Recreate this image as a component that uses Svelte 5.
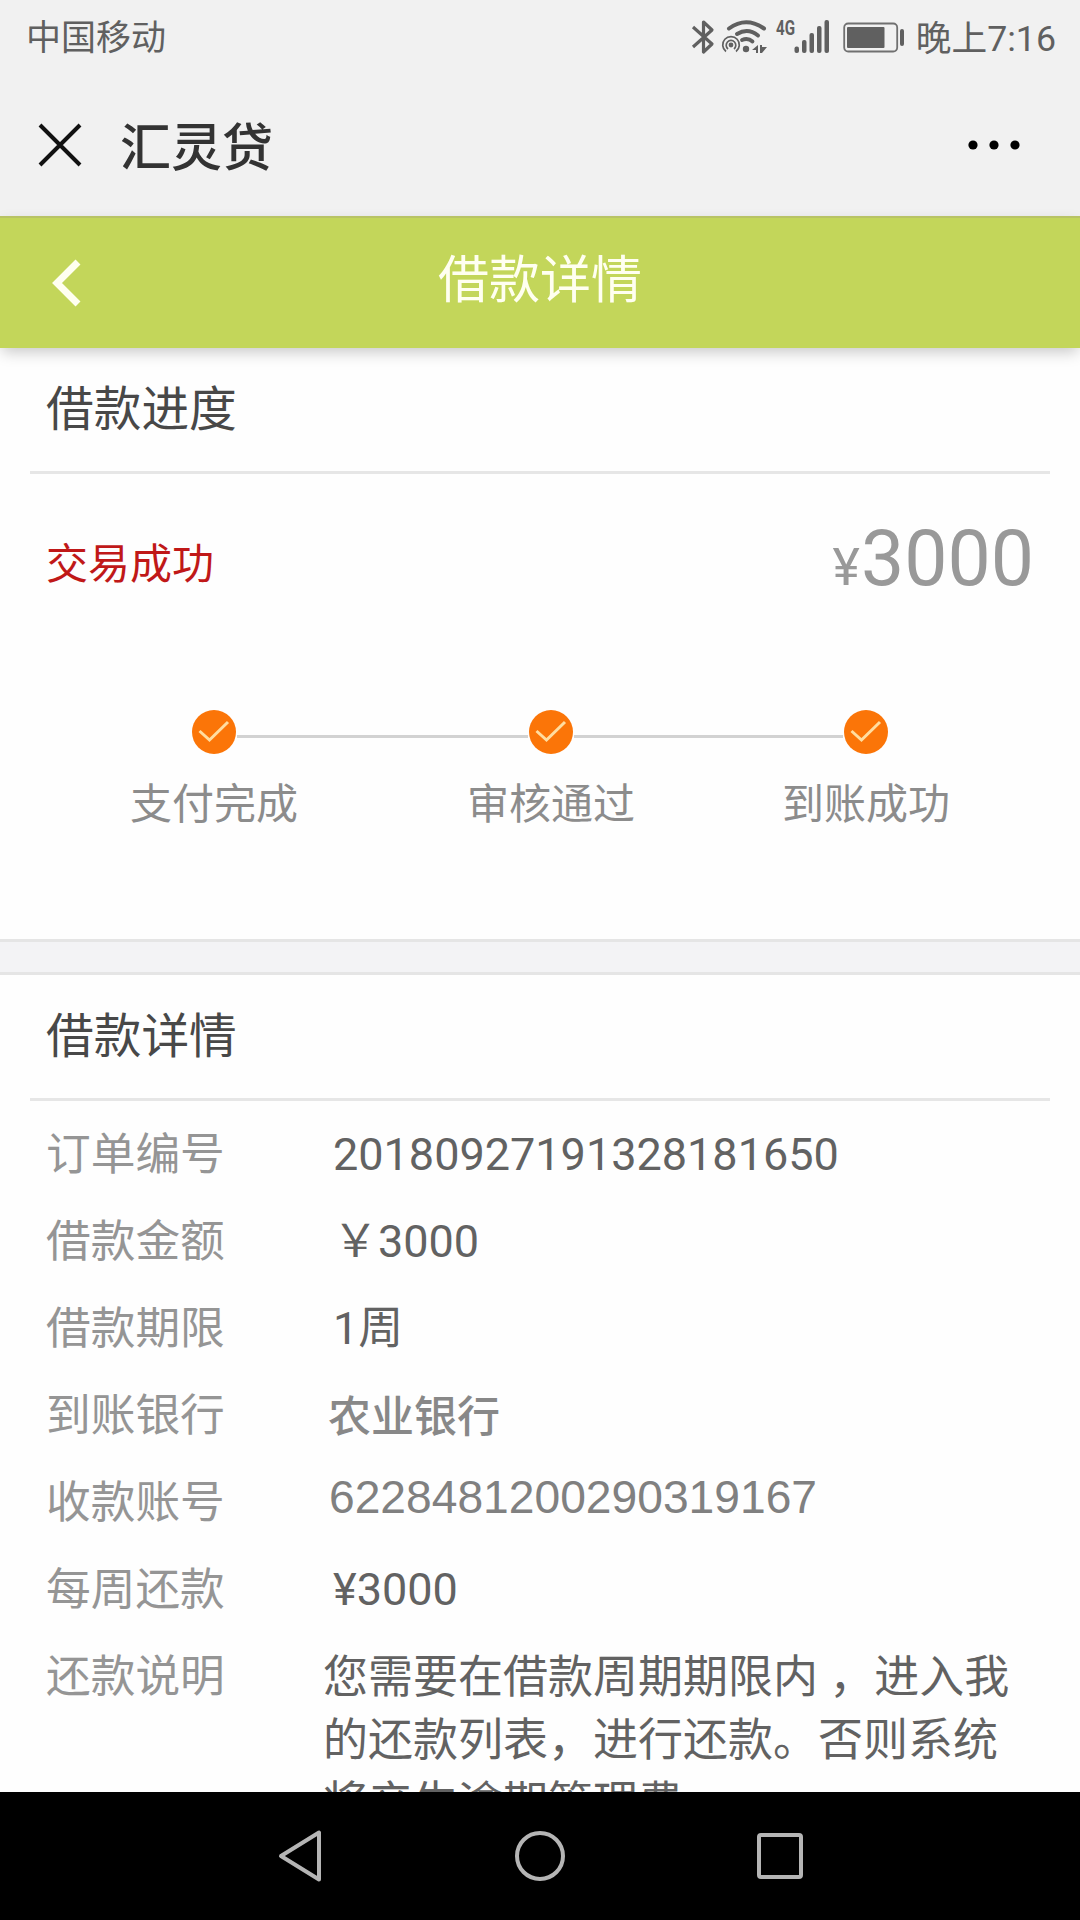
<script>
  const steps = ["支付完成", "审核通过", "到账成功"];

  const details = [
    { label: "订单编号", value: "20180927191328181650" },
    { label: "借款金额", value: "￥3000" },
    { label: "借款期限", value: "1周" },
    { label: "到账银行", value: "农业银行", kind: "bank" },
    { label: "收款账号", value: "6228481200290319167", kind: "account" },
    { label: "每周还款", value: "¥3000" },
    {
      label: "还款说明",
      value: "您需要在借款周期期限内 ，进入我的还款列表，进行还款。否则系统将产生逾期管理费。",
      kind: "note",
    },
  ];
</script>

<style>
  :global(body) {
    margin: 0;
  }

  .screen {
    display: flex;
    flex-direction: column;
    width: 1080px;
    height: 1920px;
    overflow: hidden;
    background: #fefefe;
    font-family: Roboto, "Noto Sans CJK SC", sans-serif;
  }

  svg {
    display: block;
    flex: none;
  }

  /* Status bar */
  .status {
    display: flex;
    flex: none;
    align-items: center;
    justify-content: space-between;
    box-sizing: border-box;
    height: 74px;
    padding: 0 24px 0 26px;
    background: #f1f1f1;
    color: #606060;
    font-size: 35px;
    line-height: 74px;
  }

  .status > span {
    padding-top: 4px;
  }

  .indicators {
    display: flex;
    align-items: center;
    gap: 11px;
  }

  .clock {
    padding-top: 3px;
    font-size: 35.7px;
  }

  /* Webview title */
  .titlebar {
    display: flex;
    flex: none;
    align-items: center;
    box-sizing: border-box;
    height: 142px;
    padding: 0 59px 0 38px;
    background: #f1f1f1;
    color: #333;
  }

  .titlebar h1 {
    flex: 1;
    margin: 0 0 0 38px;
    padding-top: 7px;
    font-size: 51px;
    font-weight: 500;
    line-height: 135px;
  }

  /* Page header */
  .header {
    display: grid;
    flex: none;
    grid-template-columns: 120px 1fr 120px;
    align-items: center;
    box-sizing: border-box;
    height: 132px;
    border-top: 2px solid #b8c365;
    background: #c3d65a;
    box-shadow: 0 6px 14px -2px rgba(0, 0, 0, 0.22);
    color: #fffff0;
  }

  .header svg {
    margin: 0 0 2px 50px;
  }

  .header h2 {
    margin: 0;
    padding-bottom: 6px;
    font-size: 51px;
    font-weight: 400;
    line-height: 126px;
    text-align: center;
  }

  .content {
    flex: 1;
    min-height: 0;
    overflow: hidden;
  }

  .section-title {
    margin: 0 30px;
    border-bottom: 3px solid #e6e6e6;
    padding-left: 16px;
    height: 123px;
    color: #484848;
    font-size: 47.7px;
    font-weight: 400;
    line-height: 124px;
  }

  /* Progress */
  .progress {
    height: 591px;
  }

  .summary {
    display: flex;
    justify-content: space-between;
    height: 170px;
    padding: 0 46px;
  }

  .result {
    color: #c01818;
    font-size: 42px;
    line-height: 181px;
  }

  .amount {
    color: #999;
    font-size: 77px;
    line-height: 170px;
  }

  .amount small {
    margin-right: 1px;
    font-size: 52px;
  }

  .steps {
    display: flex;
    align-items: flex-start;
    padding: 65px 130px 0;
  }

  .step {
    display: flex;
    flex-direction: column;
    align-items: center;
    width: 168px;
    color: #8c8c8c;
    font-size: 42px;
    line-height: 60px;
  }

  .step svg {
    margin-bottom: 20px;
  }

  .line {
    flex: 291 0 0;
    height: 3px;
    margin: 26px -61px 0;
    background: #d2d2d2;
  }

  .line:nth-child(4) {
    flex-grow: 269;
  }

  .divider {
    box-sizing: border-box;
    height: 36px;
    border: solid #e5e5e5;
    border-width: 3px 0;
    background: #f3f3f5;
  }

  /* Details */
  .details {
    margin: 0;
    padding: 11px 46px 0;
    font-size: 45px;
  }

  .row {
    display: flex;
    height: 87px;
    line-height: 87px;
  }

  dt {
    flex: none;
    width: 287px;
    color: #959595;
    font-size: 44.7px;
  }

  dd {
    margin: -1px 0 0;
    color: #626262;
  }

  dd.bank {
    margin: 1px 0 0 -5px;
    color: #888;
    font-size: 43px;
    font-weight: 500;
  }

  dd.account {
    margin: -6px 0 0 -4px;
    color: #808080;
    font-family: "Liberation Sans", sans-serif;
    font-size: 46.2px;
  }

  dd.note {
    flex: none;
    width: 690px;
    margin: 0 0 0 -10px;
    padding-top: 12px;
    line-height: 63px;
  }

  /* System keys */
  .navbar {
    display: flex;
    flex: none;
    align-items: center;
    justify-content: center;
    gap: 190px;
    height: 128px;
    background: #000;
  }
</style>

<div class="screen">
  <div class="status">
    <span>中国移动</span>
    <div class="indicators">
      <svg width="140" height="44" viewBox="690 14 140 44" fill="none" stroke="#606060">
        <path d="M692 26 711 43 702.5 51V21L711 29 692 46" stroke-width="3.2" stroke-linejoin="round" />
        <path d="M728 27.5Q745 15 763 27.5" stroke-width="4" stroke-linecap="round" />
        <path d="M736 33Q747 26.5 757 34.5" stroke-width="4" stroke-linecap="round" />
        <path d="M741 39Q747 36.5 751.5 40.5" stroke-width="3.8" stroke-linecap="round" />
        <path d="M725 50.5A8.3 8.3 0 1 1 735 50.5M727 48A4.8 4.8 0 1 1 733 48" stroke-width="1.7" />
        <g fill="#606060" stroke="none">
          <circle cx="730" cy="44" r="2.4" />
          <circle cx="745" cy="48" r="3.2" />
          <path d="M757 44V52H755V49H751ZM759 44H761V46H766L761 52H759Z" />
          <rect x="793.5" y="45.5" width="4.5" height="6.5" rx="2" />
          <rect x="801" y="39" width="4.5" height="13" rx="2" />
          <rect x="808.5" y="32" width="4.5" height="20" rx="2" />
          <rect x="816" y="25" width="4.5" height="27" rx="2" />
          <rect x="823.5" y="19" width="4.5" height="33" rx="2" />
          <text x="775" y="34" font-size="21" font-weight="700" textLength="19" lengthAdjust="spacingAndGlyphs">4G</text>
        </g>
      </svg>
      <svg width="63" height="44" viewBox="842 14 63 44">
        <rect x="844.2" y="22.5" width="53" height="28" rx="4" fill="none" stroke="#707070" stroke-width="1.8" />
        <rect x="847" y="26" width="37.5" height="21" rx="1" fill="#606060" />
        <rect x="900" y="28" width="4" height="17" rx="2" fill="#606060" />
      </svg>
      <span class="clock">晚上7:16</span>
    </div>
  </div>

  <div class="titlebar">
    <svg width="44" height="44" viewBox="0 0 44 44">
      <path d="M2 2 42 42M42 2 2 42" stroke="#111" stroke-width="4" />
    </svg>
    <h1>汇灵贷</h1>
    <svg width="53" height="10" viewBox="0 0 53 10">
      <circle cx="5" cy="5" r="4.6" />
      <circle cx="26" cy="5" r="4.6" />
      <circle cx="47" cy="5" r="4.6" />
    </svg>
  </div>

  <div class="header">
    <svg width="32" height="48" viewBox="0 0 32 48">
      <path d="M28 3 7 24 28 45" fill="none" stroke="#fffff0" stroke-width="7" />
    </svg>
    <h2>借款详情</h2>
  </div>

  <div class="content">
    <div class="progress">
      <h3 class="section-title">借款进度</h3>
      <div class="summary">
        <span class="result">交易成功</span>
        <span class="amount"><small>¥</small>3000</span>
      </div>
      <div class="steps">
        {#each steps as step, i}
          {#if i > 0}
            <div class="line"></div>
          {/if}
          <div class="step">
            <svg width="46" height="46" viewBox="0 0 46 46">
              <circle cx="23" cy="23" r="22" fill="#fb7508" />
              <path d="M8.5 22 18.5 31 37 13" fill="none" stroke="#ffdda0" stroke-width="3" />
            </svg>
            <span>{step}</span>
          </div>
        {/each}
      </div>
    </div>

    <div class="divider"></div>

    <h3 class="section-title">借款详情</h3>
    <dl class="details">
      {#each details as item}
        <div class="row">
          <dt>{item.label}</dt>
          <dd class={item.kind}>{item.value}</dd>
        </div>
      {/each}
    </dl>
  </div>

  <div class="navbar">
    <svg width="50" height="54" viewBox="0 0 50 54">
      <path d="M44 3.5V50.5L6 27Z" fill="none" stroke="#b5b5b5" stroke-width="4" stroke-linejoin="round" />
    </svg>
    <svg width="50" height="50" viewBox="0 0 50 50">
      <circle cx="25" cy="25" r="23" fill="none" stroke="#b5b5b5" stroke-width="4" />
    </svg>
    <svg width="50" height="50" viewBox="0 0 50 50">
      <rect x="4" y="4" width="42" height="42" rx="2" fill="none" stroke="#b5b5b5" stroke-width="4" />
    </svg>
  </div>
</div>
